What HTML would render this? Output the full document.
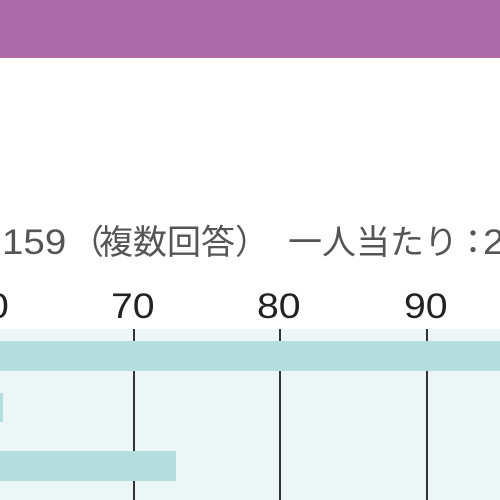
<!DOCTYPE html>
<html><head><meta charset="utf-8"><style>
body{margin:0;width:500px;height:500px;overflow:hidden;background:#fff;position:relative;font-family:"Liberation Sans","Noto Sans CJK JP",sans-serif}
.a{position:absolute}
.t{color:#555;font-size:34px;line-height:1;top:226px;white-space:nowrap}
.d{color:#555;font-size:35px;line-height:1;top:225px;transform-origin:0 0;transform:scaleX(1.1)}
.n{color:#222;font-size:35px;line-height:1;top:289px;transform-origin:0 0;transform:scaleX(1.12)}
.g{background:#333;width:1.5px}
.b{background:#b4dedd}
</style></head><body>
<div class="a" style="left:0;top:0;width:500px;height:58px;background:#ad6ca9"></div>
<div class="a d" style="left:2px">159</div>
<div class="a t" style="left:70px">（</div>
<div class="a t" style="left:99px">複数回答</div>
<div class="a t" style="left:235px">）</div>
<div class="a t" style="left:288px">一人当たり</div>
<div class="a t" style="left:456px">：</div>
<div class="a d" style="left:483px">2</div>
<div class="a n" style="left:-13px">0</div>
<div class="a n" style="left:111px">70</div>
<div class="a n" style="left:257px">80</div>
<div class="a n" style="left:404px">90</div>
<div class="a" style="left:0;top:329px;width:500px;height:171px;background:#ecf6f6"></div>
<div class="a g" style="left:133px;top:329px;height:171px"></div>
<div class="a g" style="left:279px;top:329px;height:171px"></div>
<div class="a g" style="left:426px;top:329px;height:171px"></div>
<div class="a b" style="left:0;top:341px;width:500px;height:30px"></div>
<div class="a b" style="left:0;top:393px;width:3px;height:29px"></div>
<div class="a b" style="left:0;top:451px;width:176px;height:30px"></div>
</body></html>
